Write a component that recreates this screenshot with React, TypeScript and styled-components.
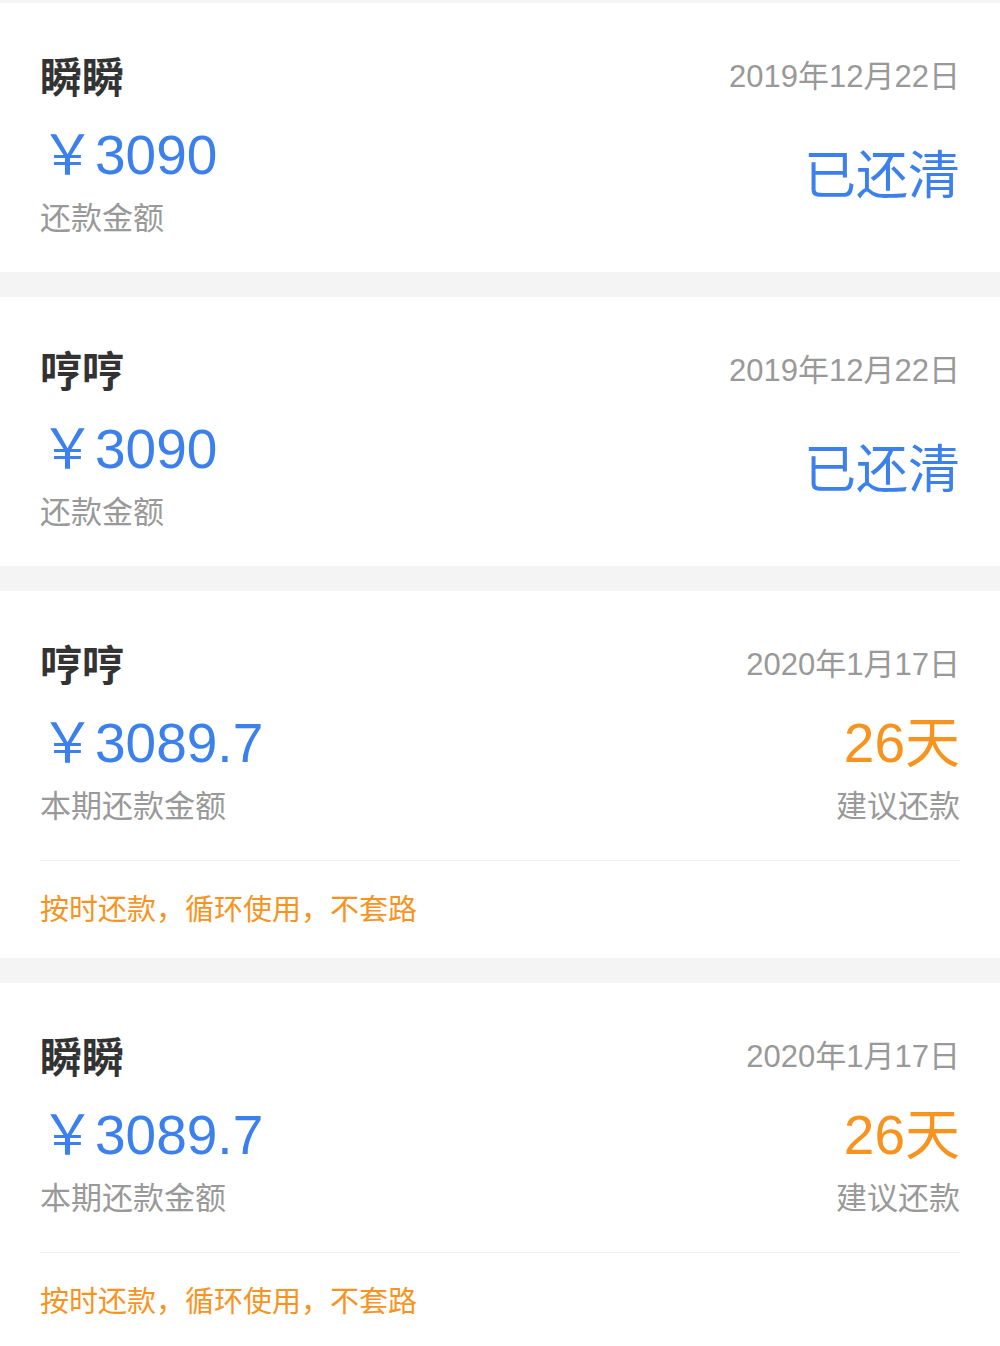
import React from "react";
import styled, { createGlobalStyle } from "styled-components";

const GlobalStyle = createGlobalStyle`
  html, body {
    margin: 0;
    padding: 0;
    background: #f4f4f4;
  }
  body {
    font-family: "Liberation Sans", "Noto Sans CJK SC", sans-serif;
  }
`;

interface Bill {
  name: string;
  date: string;
  amount: string;
  label: string;
  paid: boolean;
  days?: string;
}

const bills: Bill[] = [
  { name: "瞬瞬", date: "2019年12月22日", amount: "3090", label: "还款金额", paid: true },
  { name: "哼哼", date: "2019年12月22日", amount: "3090", label: "还款金额", paid: true },
  { name: "哼哼", date: "2020年1月17日", amount: "3089.7", label: "本期还款金额", paid: false, days: "26天" },
  { name: "瞬瞬", date: "2020年1月17日", amount: "3089.7", label: "本期还款金额", paid: false, days: "26天" },
];

const Page = styled.div`
  display: flex;
  flex-direction: column;
  gap: 25px;
  padding-top: 3px;
  min-height: 1346px;
  box-sizing: border-box;
`;

const Card = styled.div`
  background: #fff;
  padding: 0 40px;
`;

const Body = styled.div`
  display: flex;
  justify-content: space-between;
  padding: 42px 0 33px;
`;

const Column = styled.div<{ $right?: boolean }>`
  display: flex;
  flex-direction: column;
  align-items: ${(p) => (p.$right ? "flex-end" : "flex-start")};
`;

const Name = styled.div`
  height: 60px;
  line-height: 60px;
  font-size: 42px;
  font-weight: 700;
  color: #333;
  font-family: "Noto Sans CJK SC", sans-serif;
`;

const DateText = styled.div`
  height: 60px;
  line-height: 64px;
  font-size: 31px;
  color: #999;
`;

const Amount = styled.div<{ $color?: string }>`
  margin-top: 18px;
  height: 64px;
  line-height: 64px;
  font-size: 55px;
  color: ${(p) => p.$color || "#3b80ec"};
  white-space: nowrap;
`;

const Caption = styled.div`
  margin-top: 12px;
  height: 40px;
  line-height: 34px;
  font-size: 31px;
  color: #999;
  font-family: "Noto Sans CJK SC", sans-serif;
`;

const Status = styled.div`
  margin-top: 37px;
  height: 60px;
  line-height: 60px;
  font-size: 52px;
  color: #3b80ec;
  font-family: "Noto Sans CJK SC", sans-serif;
`;

const Divider = styled.div`
  height: 1px;
  background: #f0f0f0;
`;

const Footer = styled.div`
  height: 97px;
  box-sizing: border-box;
  padding-bottom: 6px;
  display: flex;
  align-items: center;
  font-size: 29px;
  color: #f7931e;
  font-family: "Noto Sans CJK SC", sans-serif;
`;

function BillCard({ bill }: { bill: Bill }) {
  return (
    <Card>
      <Body>
        <Column>
          <Name>{bill.name}</Name>
          <Amount>￥{bill.amount}</Amount>
          <Caption>{bill.label}</Caption>
        </Column>
        <Column $right>
          <DateText>{bill.date}</DateText>
          {bill.paid ? (
            <Status>已还清</Status>
          ) : (
            <>
              <Amount $color="#f7931e">{bill.days}</Amount>
              <Caption>建议还款</Caption>
            </>
          )}
        </Column>
      </Body>
      {!bill.paid && (
        <>
          <Divider />
          <Footer>按时还款，循环使用，不套路</Footer>
        </>
      )}
    </Card>
  );
}

export default function App() {
  return (
    <>
      <GlobalStyle />
      <Page>
        {bills.map((b, i) => (
          <BillCard key={i} bill={b} />
        ))}
      </Page>
    </>
  );
}
